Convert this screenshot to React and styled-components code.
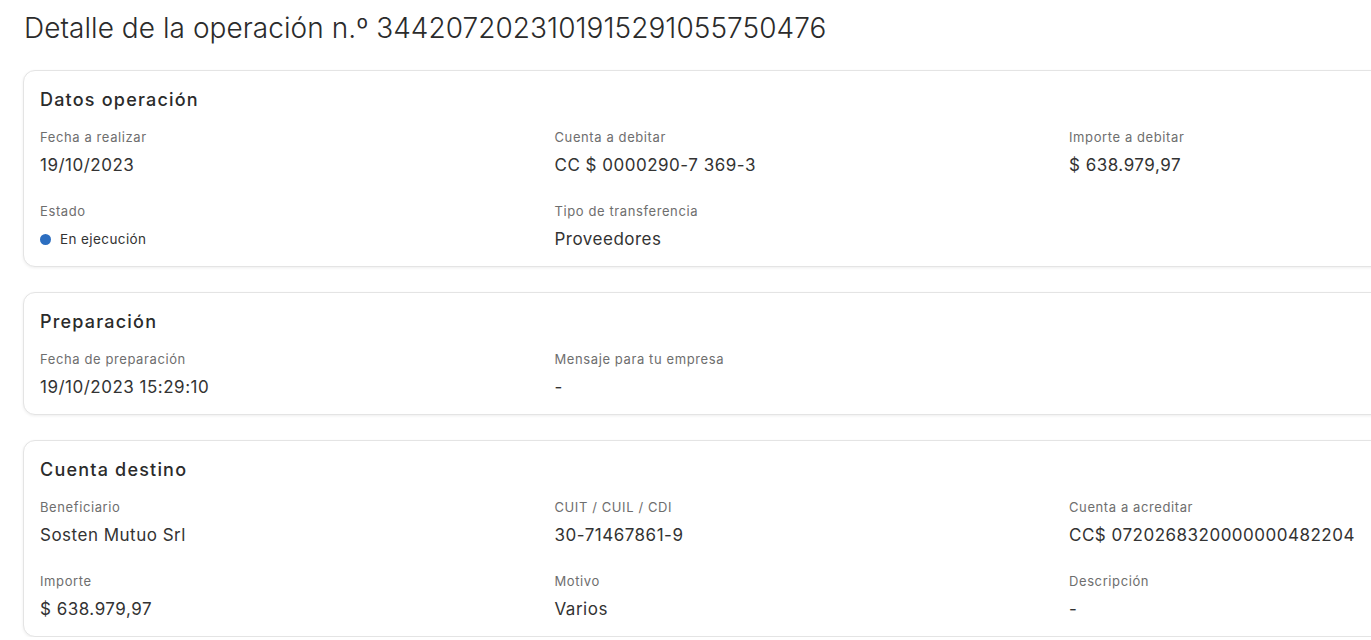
import React from "react";
import styled, { createGlobalStyle } from "styled-components";

const GlobalStyle = createGlobalStyle`
  html, body {
    margin: 0;
    padding: 0;
    background: #ffffff;
    overflow: hidden;
    font-family: Inter, "Noto Sans", sans-serif;
    color: #333333;
  }
`;

const sections = [
  {
    title: "Datos operación",
    fields: [
      { label: "Fecha a realizar", value: "19/10/2023" },
      { label: "Cuenta a debitar", value: "CC $ 0000290-7 369-3" },
      { label: "Importe a debitar", value: "$ 638.979,97" },
      { label: "Estado", value: "En ejecución", status: true },
      { label: "Tipo de transferencia", value: "Proveedores" },
    ],
  },
  {
    title: "Preparación",
    fields: [
      { label: "Fecha de preparación", value: "19/10/2023 15:29:10" },
      { label: "Mensaje para tu empresa", value: "-" },
    ],
  },
  {
    title: "Cuenta destino",
    fields: [
      { label: "Beneficiario", value: "Sosten Mutuo Srl" },
      { label: "CUIT / CUIL / CDI", value: "30-71467861-9" },
      { label: "Cuenta a acreditar", value: "CC$ 0720268320000000482204" },
      { label: "Importe", value: "$ 638.979,97" },
      { label: "Motivo", value: "Varios" },
      { label: "Descripción", value: "-" },
    ],
  },
];

const App = () => {
  return (
    <Page>
      <GlobalStyle />
      <Heading>Detalle de la operación n.º 3442072023101915291055750476</Heading>
      <Stack>
        {sections.map((s) => (
          <Card key={s.title}>
            <CardTitle>{s.title}</CardTitle>
            <Grid>
              {s.fields.map((f) => (
                <Field key={f.label}>
                  <Label>{f.label}</Label>
                  {f.status ? (
                    <Status>
                      <Dot />
                      {f.value}
                    </Status>
                  ) : (
                    <Value>{f.value}</Value>
                  )}
                </Field>
              ))}
            </Grid>
          </Card>
        ))}
      </Stack>
    </Page>
  );
};

export default App;

const Page = styled.div`
  padding: 11px 0 0 23px;
  width: 1580px;
`;

const Heading = styled.h1`
  margin: 0 0 25px 1px;
  font-size: 28px;
  line-height: 34px;
  font-weight: 300;
  color: #2b2b2b;
  letter-spacing: 0.05px;
`;

const Stack = styled.div`
  display: flex;
  flex-direction: column;
  gap: 25px;
`;

const Card = styled.section`
  border: 1px solid #e4e4e4;
  border-radius: 12px;
  box-shadow: 0 1px 3px rgba(0, 0, 0, 0.07);
  background: #fff;
  padding: 16px;
`;

const CardTitle = styled.h2`
  margin: 1px 0 16px;
  font-size: 18px;
  line-height: 24px;
  font-weight: 500;
  color: #2b2b2b;
  letter-spacing: 1.2px;
`;

const Grid = styled.div`
  display: grid;
  grid-template-columns: repeat(3, 514.5px);
  row-gap: 26px;
`;

const Field = styled.div`
  display: flex;
  flex-direction: column;
  gap: 8px;
`;

const Label = styled.span`
  font-size: 13px;
  line-height: 18px;
  color: #6e6e6e;
  letter-spacing: 0.6px;
`;

const Value = styled.span`
  font-size: 17px;
  line-height: 22px;
  color: #333;
  letter-spacing: 0.5px;
`;

const Status = styled.span`
  display: flex;
  align-items: center;
  gap: 9px;
  font-size: 13.5px;
  line-height: 22px;
  color: #333;
  letter-spacing: 0.4px;
`;

const Dot = styled.span`
  width: 11px;
  height: 11px;
  border-radius: 50%;
  background: #2c6ec0;
`;
